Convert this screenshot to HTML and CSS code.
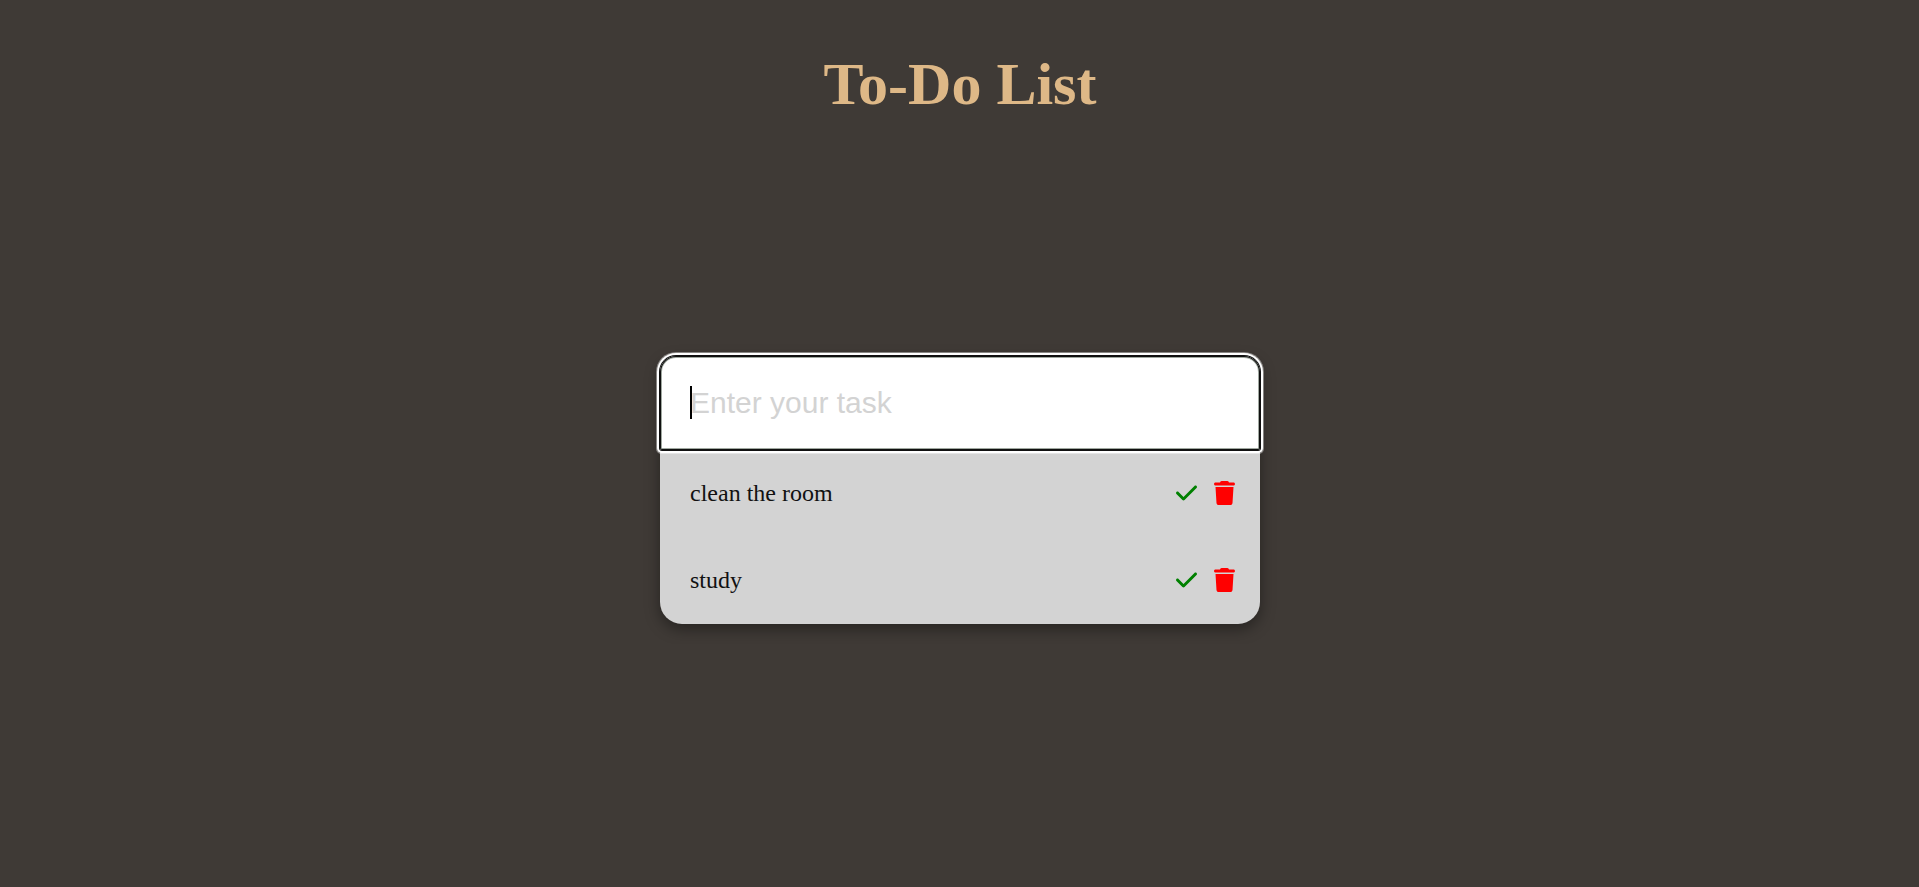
FILE: index.html
```html
<!DOCTYPE html>
<html lang="en">
<head>
<meta charset="utf-8">
<title>To-Do List</title>
<link rel="stylesheet" href="styles.css">
</head>
<body>
<svg class="sprite" aria-hidden="true">
  <symbol id="check" viewBox="0 0 448 512"><path d="M438.600 105.400c12.500 12.500 12.500 32.800 0 45.300l-256 256c-12.500 12.500-32.800 12.500-45.300 0l-128-128c-12.500-12.500-12.500-32.800 0-45.300s32.800-12.500 45.300 0L160 338.700 393.400 105.400c12.500-12.500 32.800-12.500 45.300 0z"/></symbol>
  <symbol id="trash" viewBox="0 0 448 512"><path d="M135.200 17.700L128 32H32C14.300 32 0 46.300 0 64S14.300 96 32 96H416c17.700 0 32-14.300 32-32s-14.300-32-32-32H320l-7.200-14.300C307.400 6.800 296.300 0 284.200 0H163.800c-12.100 0-23.200 6.800-28.600 17.700zM416 128H32L53.200 467c1.600 25.300 22.600 45 47.900 45H346.900c25.300 0 46.300-19.700 47.900-45L416 128z"/></symbol>
</svg>
<h1 class="title">To-Do List</h1>
<main class="stage">
  <section class="card">
    <form class="entry">
      <input class="entry-input" type="text" placeholder="Enter your task" aria-label="Enter your task" autofocus>
      <span class="caret" aria-hidden="true"></span>
    </form>
    <ul class="tasks">
      <li class="task">
        <span class="task-name">clean the room</span>
        <button class="action done" type="button" aria-label="Complete clean the room"><svg class="icon"><use href="#check"/></svg></button>
        <button class="action remove" type="button" aria-label="Delete clean the room"><svg class="icon"><use href="#trash"/></svg></button>
      </li>
      <li class="task">
        <span class="task-name">study</span>
        <button class="action done" type="button" aria-label="Complete study"><svg class="icon"><use href="#check"/></svg></button>
        <button class="action remove" type="button" aria-label="Delete study"><svg class="icon"><use href="#trash"/></svg></button>
      </li>
    </ul>
  </section>
</main>
</body>
</html>
```
FILE: styles.css
```css
* {
  box-sizing: border-box;
}

body {
  margin: 0;
  padding-left: 1px;
  background: #3f3a36;
  font-family: "Liberation Serif", "Times New Roman", serif;
}

.sprite {
  display: none;
}

.title {
  margin: 50px 0 0;
  color: burlywood;
  font-size: 60px;
  line-height: 69px;
  text-align: center;
}

.stage {
  display: flex;
  justify-content: center;
  padding: 237px 20px 20px;
}

.card {
  width: 100%;
  max-width: 600px;
  border-radius: 16px 16px 22px 22px;
  background: lightgray;
  box-shadow: 0 5px 15px rgba(0, 0, 0, 0.4);
}

.entry {
  position: relative;
}

.entry-input {
  display: block;
  width: 100%;
  padding: 30px;
  border: 0;
  border-radius: 16px 16px 2px 2px;
  background: white;
  color: black;
  caret-color: transparent;
  font-family: "Liberation Sans", Arial, sans-serif;
  font-size: 30px;
  line-height: 34px;
}

.entry-input:focus {
  outline: 0;
  box-shadow:
    inset 0 0 0 1px #101010,
    inset 0 0 0 2px #a0a8a0,
    0 0 0 1px #101010,
    0 0 0 3px white,
    0 0 0 4px rgba(255, 255, 255, 0.4);
}

.entry-input::placeholder {
  color: lightgray;
}

.caret {
  position: absolute;
  top: 30px;
  left: 30px;
  width: 2px;
  height: 33px;
  background: black;
}

.tasks {
  margin: 0;
  padding: 0;
  list-style: none;
}

.task {
  display: flex;
  align-items: center;
  gap: 17px;
  padding: 30px 25px 30px 30px;
  color: #111;
  font-size: 24px;
  line-height: 27px;
}

.task-name {
  flex: 1;
}

.action {
  display: block;
  padding: 0 0 1px;
  border: 0;
  background: none;
  cursor: pointer;
}

.icon {
  display: block;
  width: 21px;
  height: 24px;
  fill: currentColor;
}

.done {
  color: green;
}

.remove {
  color: red;
}
```
